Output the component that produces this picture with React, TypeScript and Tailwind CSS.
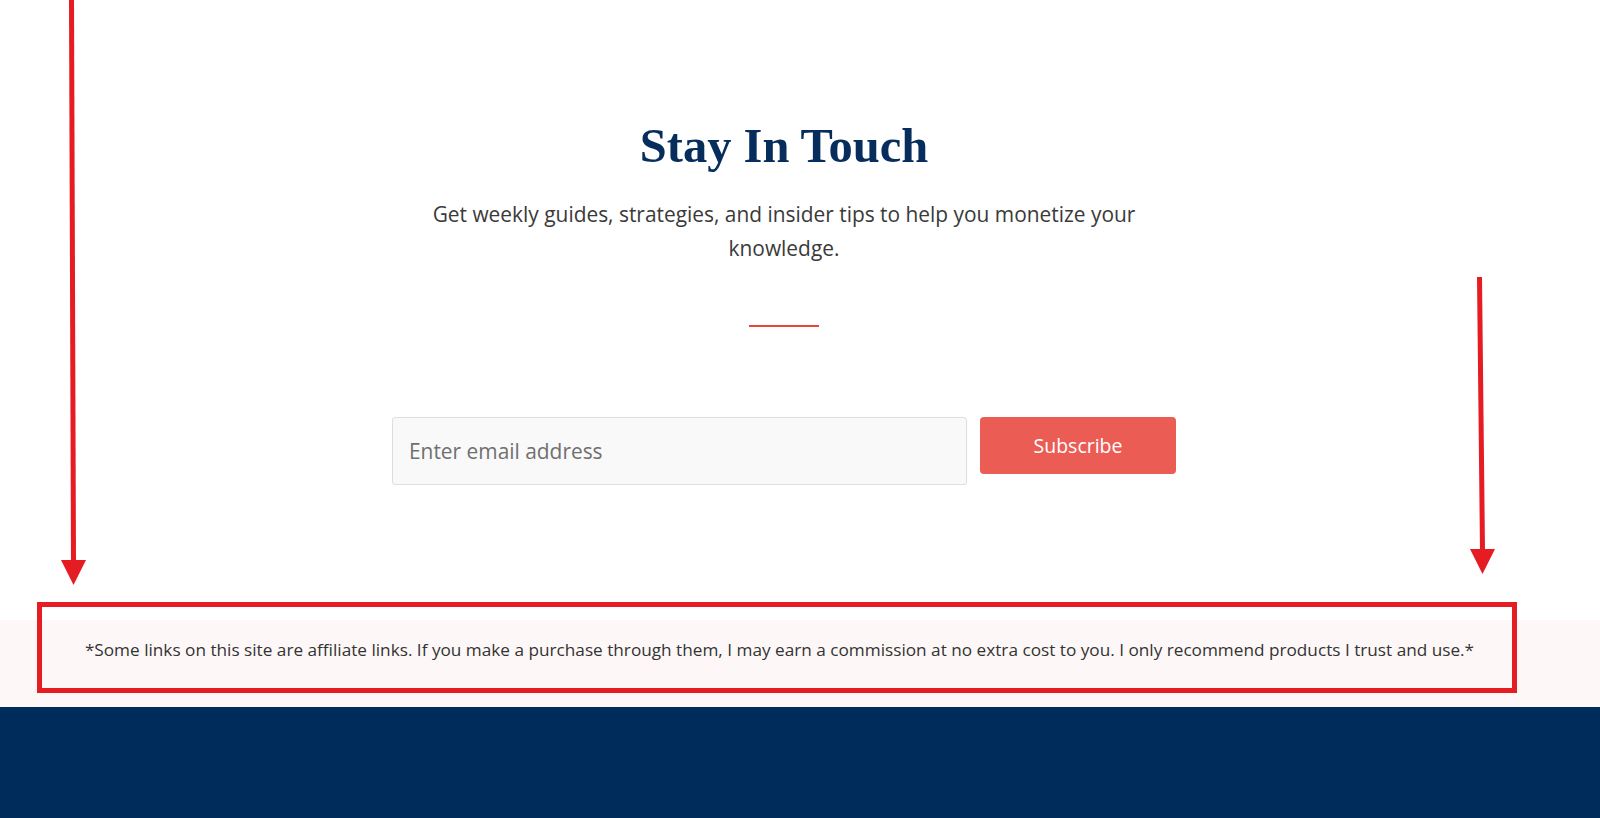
import React from "react";

const sans = { fontFamily: '"Open Sans", "Noto Sans", Arial, sans-serif' };

function Arrows() {
  return (
    <svg
      className="pointer-events-none absolute left-0 top-0"
      width={1600}
      height={818}
      viewBox="0 0 1600 818"
    >
      {/* left pointer */}
      <line x1={71.5} y1={0} x2={73.5} y2={562} stroke="#e61c23" strokeWidth={5} />
      <polygon points="61,560 86,560 73.5,585" fill="#e61c23" />
      {/* right pointer */}
      <line x1={1479.5} y1={277} x2={1482.5} y2={551} stroke="#e61c23" strokeWidth={5} />
      <polygon points="1470,549 1495,549 1482.5,574" fill="#e61c23" />
    </svg>
  );
}

export default function App() {
  return (
    <div className="relative h-[818px] w-full overflow-hidden bg-white" style={sans}>
      <section className="pr-8 pt-[118px] pb-[135px]">
        <div className="mx-auto max-w-[760px] text-center">
          <h2
            className="text-[48.5px] font-bold leading-[56px] text-[#062d5c]"
            style={{ fontFamily: '"Liberation Serif", "Times New Roman", serif' }}
          >
            Stay In Touch
          </h2>
          <p className="mx-auto mt-[23px] max-w-[720px] text-[20.9px] leading-[34px] text-[#3a3a3a]">
            Get weekly guides, strategies, and insider tips to help you monetize your knowledge.
          </p>
          <div className="mx-auto mt-[60px] h-[2px] w-[70px] bg-[#e8453d]" />
        </div>
        <form
          className="mt-[90px] flex items-start justify-center gap-[13px]"
          onSubmit={(e) => e.preventDefault()}
        >
          <input
            type="email"
            placeholder="Enter email address"
            className="h-[68px] w-[575px] rounded-[3px] border border-[#dedede] bg-[#f9f9f9] px-[16px] text-[20.9px] text-[#333] outline-none placeholder:text-[#707070]"
            style={sans}
          />
          <button
            type="submit"
            className="h-[57px] w-[196px] rounded-[4px] bg-[#eb5c55] text-[19.5px] text-white"
            style={sans}
          >
            Subscribe
          </button>
        </form>
      </section>

      <div className="h-[87px] bg-[#fdf8f7] pr-[41px] pt-[18px]">
        <p className="text-center text-[17.2px] leading-[24px] text-[#333]">
          *Some links on this site are affiliate links. If you make a purchase through them, I may earn a commission at no extra cost to you. I only recommend products I trust and use.*
        </p>
      </div>

      <footer className="h-[111px] bg-[#002c5c]" />

      {/* highlight frame around the disclosure */}
      <div className="pointer-events-none absolute left-[37px] top-[602px] h-[91px] w-[1480px] border-[5px] border-[#e61c23]" />
      <Arrows />
    </div>
  );
}
